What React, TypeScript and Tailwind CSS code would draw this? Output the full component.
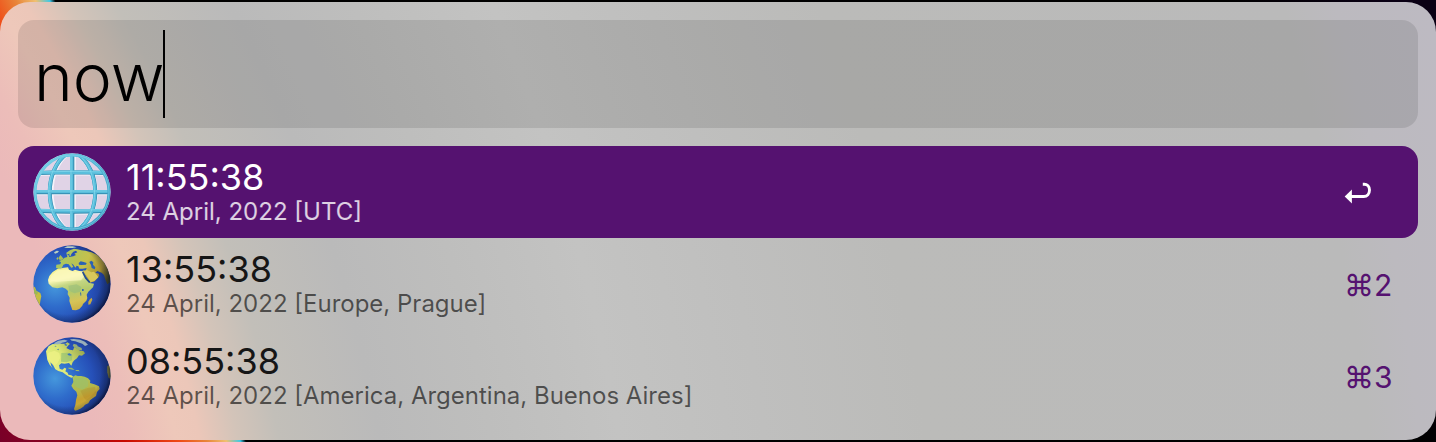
import { useState, type ReactNode } from "react";

const SPHERE_EDGE = "M156 21a116 116 0 1 0 0 232a116 116 0 1 0 0-232z";

function GridGlobe() {
  return (
    <svg viewBox="39 20 234 234" className="size-[78px] shrink-0" aria-hidden="true">
      <defs>
        <linearGradient id="grid-stroke" x1="0" y1="0" x2="1" y2="1">
          <stop offset="0" stopColor="#7ad4ea" />
          <stop offset="0.5" stopColor="#4fb3d3" />
          <stop offset="1" stopColor="#3f9cc2" />
        </linearGradient>
        <clipPath id="grid-clip">
          <path d={SPHERE_EDGE} />
        </clipPath>
      </defs>
      <path d={SPHERE_EDGE} fill="#e0d3e6" />
      <g clipPath="url(#grid-clip)" fill="none">
        <g stroke="#f3f3fa" strokeWidth="13">
          <path d="M60 82Q156 78 252 82M42 140H270M58 196Q156 202 254 196M161 22V252" />
          <path d="M143 22C78 70 78 205 143 252M169 22C246 70 246 205 169 252" />
        </g>
        <g stroke="#2f86ab" strokeWidth="12">
          <path d="M60 80Q156 76 252 80M42 138H270M58 194Q156 198 254 194M157 22V252" />
          <path d="M141 22C72 70 72 205 141 252M171 22C244 70 244 205 171 252" />
        </g>
        <g stroke="#58bddb" strokeWidth="10">
          <path d="M60 79Q156 75 252 79M42 136H270M58 192Q156 196 254 192M155 22V252" />
          <path d="M141 22C71 70 71 205 141 252M171 22C243 70 243 205 171 252" />
        </g>
        <g stroke="#8bdcef" strokeWidth="2">
          <path d="M62 77Q156 73 250 77M44 134H268M60 190Q156 194 252 190M153 24V250" />
          <path d="M139 22C69 70 69 205 139 252M171 22C241 70 241 205 171 252" />
        </g>
      </g>
      <circle cx="156" cy="137" r="111" fill="none" stroke="url(#grid-stroke)" strokeWidth="9" />
      <circle cx="156" cy="137" r="111" fill="none" stroke="#7ed2e8" strokeWidth="2" />
    </svg>
  );
}

function Earth({ id, children }: { id: string; children: ReactNode }) {
  return (
    <svg viewBox="39 20 234 234" className="size-[78px] shrink-0" aria-hidden="true">
      <defs>
        <radialGradient id={`${id}-sea`} gradientUnits="userSpaceOnUse" cx="105" cy="145" r="150">
          <stop offset="0" stopColor="#4597dc" />
          <stop offset="0.4" stopColor="#2f6ccb" />
          <stop offset="0.75" stopColor="#2650b8" />
          <stop offset="1" stopColor="#1f3d94" />
        </radialGradient>
        <radialGradient id={`${id}-shade`} gradientUnits="userSpaceOnUse" cx="138" cy="124" r="136">
          <stop offset="0.76" stopColor="#0a1838" stopOpacity="0" />
          <stop offset="0.92" stopColor="#0a1838" stopOpacity="0.35" />
          <stop offset="1" stopColor="#0a1030" stopOpacity="0.8" />
        </radialGradient>
        <linearGradient id={`${id}-africa`} gradientUnits="userSpaceOnUse" x1="140" y1="85" x2="170" y2="215">
          <stop offset="0" stopColor="#f3f08a" />
          <stop offset="0.24" stopColor="#fbf8b6" />
          <stop offset="0.4" stopColor="#c3d582" />
          <stop offset="0.58" stopColor="#b4ca6c" />
          <stop offset="0.8" stopColor="#d6c458" />
          <stop offset="1" stopColor="#cbb045" />
        </linearGradient>
        <linearGradient id={`${id}-asia`} gradientUnits="userSpaceOnUse" x1="120" y1="50" x2="265" y2="120">
          <stop offset="0" stopColor="#a5c863" />
          <stop offset="0.5" stopColor="#c5c04c" />
          <stop offset="0.8" stopColor="#a99130" />
          <stop offset="1" stopColor="#4d4a1c" />
        </linearGradient>
        <linearGradient id={`${id}-north`} gradientUnits="userSpaceOnUse" x1="90" y1="105" x2="180" y2="45">
          <stop offset="0" stopColor="#e6ef80" />
          <stop offset="0.45" stopColor="#d8e573" />
          <stop offset="1" stopColor="#9aa84e" />
        </linearGradient>
        <linearGradient id={`${id}-south`} gradientUnits="userSpaceOnUse" x1="170" y1="140" x2="205" y2="235">
          <stop offset="0" stopColor="#a9c35d" />
          <stop offset="0.4" stopColor="#b4b84b" />
          <stop offset="0.65" stopColor="#c6a132" />
          <stop offset="1" stopColor="#d0b63c" />
        </linearGradient>
        <clipPath id={`${id}-clip`}>
          <path d={SPHERE_EDGE} />
        </clipPath>
      </defs>
      <path d={SPHERE_EDGE} fill={`url(#${id}-sea)`} />
      <g clipPath={`url(#${id}-clip)`}>
        {children}
        <path d={SPHERE_EDGE} fill={`url(#${id}-shade)`} />
      </g>
    </svg>
  );
}

function AfricaGlobe() {
  return (
    <Earth id="east">
      {/* Europe and Asia */}
      <path
        fill="url(#east-asia)"
        d="M108 88L109 79L121 78L123 72L117 68L127 64L134 58L142 56L141 49L146 51L148 56L160 54L168 50L163 46L172 42L168 37L160 40L154 47L152 53L147 51L149 46L140 49L139 43L150 36L162 31L172 33L184 36L196 37L214 42L232 50L250 68L264 92L272 118L270 132L262 138L257 126L252 110L245 103L232 98L226 103L236 106L238 113L224 129L210 133L201 119L190 101L188 96L197 97L200 89L188 91L178 91L175 84L170 82L166 88L160 79L154 75L160 86L154 88L146 78L138 76L130 79L126 88L116 92Z"
      />
      <path fill="#a9bd59" d="M118 64L116 58L121 50L126 55L131 62L124 65ZM109 61L113 56L116 60L112 65Z" />
      <path fill="#b9cfc0" d="M102 42L110 37L117 38L113 43L105 46ZM132 28L142 24L158 24L170 27L157 29L142 29Z" />
      <path fill="#2b62b4" d="M176 74L182 69L191 71L200 74L198 79L184 80L177 79ZM208 71L214 67L220 72L219 79L226 87L224 93L215 89L213 80Z" />
      <path fill="#d9c75a" d="M190 98L201 95L214 102L222 100L231 111L235 117L223 128L211 132L204 118Z" />
      {/* Africa */}
      <path
        fill="url(#east-africa)"
        d="M112 92L132 88L144 87L147 94L158 98L165 94L178 98L188 99L192 108L199 120L209 134L222 136L219 147L205 160L200 169L202 179L199 187L189 197L187 202L178 212L168 216L157 215L153 203L148 188L149 178L143 168L144 158L137 151L127 147L112 150L97 147L86 136L84 125L88 113L98 101Z"
      />
      <path fill="#fbf8c0" opacity="0.75" d="M112 96L142 93L158 101L183 103L191 116L183 126L145 128L110 130L89 126L94 112Z" />
      <path fill="#96bc7b" opacity="0.6" d="M145 142L170 138L184 146L180 160L164 165L148 158Z" />
      <path fill="#3469ae" d="M186 152L191 152L191 158L186 158ZM180 163L183 162L184 171L182 173Z" />
      <path fill="none" stroke="#254c8f" strokeWidth="5" d="M188 101L197 119L209 132" />
      <path fill="#c5a843" d="M215 178L217 184L211 198L205 199L205 190L210 183Z" />
      {/* South American coast */}
      <path fill="#c5bd40" d="M38 143L45 147L49 157L61 164L64 174L61 188L59 202L50 194L40 170Z" />
      <path fill="#98b756" d="M41 150L47 156L54 163L50 170L42 163Z" />
    </Earth>
  );
}

function AmericasGlobe() {
  return (
    <Earth id="west">
      {/* Arctic islands and Greenland */}
      <path fill="#b9cbbf" opacity="0.8" d="M102 39L115 31L133 28L143 31L136 35L126 37L117 43L107 43ZM150 27L162 26L181 28L195 34L204 43L195 47L187 40L178 37L166 33L155 31Z" />
      <path fill="#94ab78" d="M161 40L171 43L173 48L185 53L186 60L175 59L167 53L158 47Z" />
      {/* North America */}
      <path
        fill="url(#west-north)"
        d="M78 63L86 48L98 41L112 42L124 40L136 40L142 36L150 41L144 46L139 53L149 58L159 60L163 50L173 56L180 61L190 62L195 69L186 76L177 75L171 84L163 90L158 96L154 106L147 98L134 100L124 99L117 105L119 115L127 118L134 112L139 115L136 123L143 127L145 133L154 135L160 139L154 142L145 138L138 133L128 126L115 122L106 117L99 104L91 96L94 107L98 114L89 103L82 89L80 76Z"
      />
      <path fill="#eef184" opacity="0.8" d="M84 68L103 61L118 68L121 82L112 99L104 106L91 92L83 86Z" />
      <path fill="#8bbb74" opacity="0.6" d="M124 68L145 67L157 75L156 90L140 96L123 94Z" />
      <path fill="#3874bd" d="M142 71L149 69L156 74L151 76L145 75ZM135 40L142 43L139 47L133 44ZM103 48L108 46L109 49ZM111 57L117 55L115 60Z" />
      <path fill="#9cba68" d="M144 112L155 112L164 118L157 118L146 115ZM166 119L176 119L179 123L168 122Z" />
      {/* South America */}
      <path
        fill="url(#west-south)"
        d="M157 141L166 135L173 137L183 137L194 139L204 144L211 151L210 158L223 162L237 168L239 176L231 185L228 197L218 204L210 210L205 219L195 223L190 229L181 235L171 240L165 241L162 236L166 224L168 209L172 195L169 184L160 176L154 166L160 155L159 147Z"
      />
      <path fill="#9bc06c" opacity="0.65" d="M165 145L191 143L204 153L204 168L188 178L169 171L161 162Z" />
      <path fill="#a37a23" opacity="0.25" d="M181 181L203 173L225 170L228 186L216 201L200 211L192 202Z" />
      <path fill="#9f922b" d="M262 108L268 103L274 125L273 146L266 143L262 126Z" />
    </Earth>
  );
}

function ReturnArrow() {
  return (
    <svg viewBox="0 0 28 22" className="h-[22px] w-7" aria-label="Return" role="img">
      <path d="M18.800 2.200h1.400c3 0 5.300 2.200 5.300 5.900s-2.400 6.400-5.700 6.400H7" fill="none" stroke="currentColor" strokeWidth="2.900" />
      <path d="M.7 14.500L7.900 7.500V21.500z" fill="currentColor" />
    </svg>
  );
}

const results = [
  { time: "11:55:38", detail: "24 April, 2022 [UTC]", icon: <GridGlobe />, shortcut: "⌘1" },
  { time: "13:55:38", detail: "24 April, 2022 [Europe, Prague]", icon: <AfricaGlobe />, shortcut: "⌘2" },
  {
    time: "08:55:38",
    detail: "24 April, 2022 [America, Argentina, Buenos Aires]",
    icon: <AmericasGlobe />,
    shortcut: "⌘3",
  },
];

export default function App() {
  const [query, setQuery] = useState("now");
  const [selected, setSelected] = useState(0);

  return (
    <main className="bg-[linear-gradient(66.6deg,#780028_0px,#8c0020_50px,#c80800_115px,#ef4a16_165px,#e8853a_190px,#f0c070_208px,#3ec8e8_221px,#000_226px,#000_1300px,#0a0014_1450px)] py-0.5 font-['Inter',sans-serif]">
      <div className="flex flex-col gap-[18px] rounded-[30px] bg-[radial-gradient(circle_2600px_at_-1077px_698px,#ebb9ba_1200px,#ecbdb9_1235px,#eec8ba_1280px,#ecc7b9_1303px,#d3c4b9_1340px,#c2bfb9_1381px,#bababa_1480px,#bebebd_1590px,#c3c3c2_1716px,#bfbfbe_1860px,#bbbbb9_2020px,#bababa_2460px,#bcbabf_2510px,#bdbac2_2600px)] p-[18px]">
        <label className="flex h-[108px] items-center rounded-2xl bg-black/10 px-4">
          <span className="sr-only">Search</span>
          <input
            type="text"
            value={query}
            onChange={(event) => setQuery(event.target.value)}
            spellCheck={false}
            className="h-[104px] max-w-full [field-sizing:content] bg-transparent pt-1.5 pr-1 text-[66px] leading-[96px] font-light text-black caret-transparent outline-none"
          />
          <span className="-ml-1.5 h-[88px] w-0.5 shrink-0 bg-black" aria-hidden="true" />
        </label>
        <ul>
          {results.map((result, index) => {
            const active = index === selected;
            return (
              <li key={result.detail}>
                <button
                  type="button"
                  onClick={() => setSelected(index)}
                  className={`flex h-[92px] w-full items-center gap-[15px] rounded-2xl pr-[22px] pl-[15px] text-left ${
                    active ? "bg-[#551270] text-white" : "text-[#161616]"
                  }`}
                >
                  {result.icon}
                  <span className="flex min-w-0 flex-1 flex-col pt-0.5">
                    <span className="text-[36px] leading-[38px] whitespace-nowrap">{result.time}</span>
                    <span
                      className={`text-[24px] leading-8 whitespace-nowrap ${active ? "text-white/80" : "text-black/60"}`}
                    >
                      {result.detail}
                    </span>
                  </span>
                  <span className={`w-[52px] shrink-0 pt-0.5 text-[30px] leading-10 ${active ? "text-white" : "text-[#551270]"}`}>
                    {active ? <ReturnArrow /> : result.shortcut}
                  </span>
                </button>
              </li>
            );
          })}
        </ul>
      </div>
    </main>
  );
}
